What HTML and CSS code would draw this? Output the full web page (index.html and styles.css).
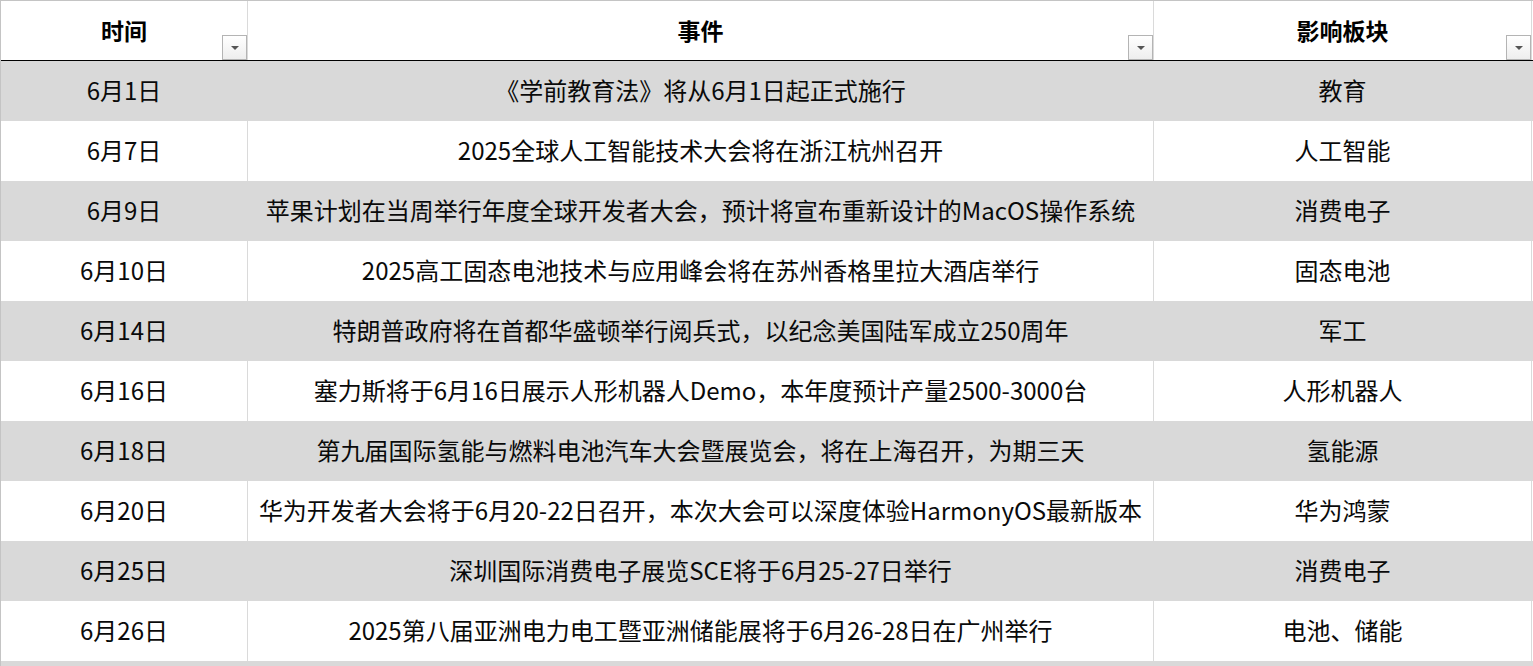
FILE: index.html
```html
<!DOCTYPE html>
<html lang="zh-CN">
<head>
<meta charset="utf-8">
<title>6月事件</title>
<link rel="stylesheet" href="styles.css">
</head>
<body>
<div class="sheet">
  <div class="row head">
    <div class="cell c1">时间<span class="dd"><span class="tri"></span></span></div>
    <div class="cell c2">事件<span class="dd"><span class="tri"></span></span></div>
    <div class="cell c3">影响板块<span class="dd"><span class="tri"></span></span></div>
  </div>
  <div class="row alt"><div class="cell c1">6月1日</div><div class="cell c2">《学前教育法》将从6月1日起正式施行</div><div class="cell c3">教育</div></div>
  <div class="row"><div class="cell c1">6月7日</div><div class="cell c2">2025全球人工智能技术大会将在浙江杭州召开</div><div class="cell c3">人工智能</div></div>
  <div class="row alt"><div class="cell c1">6月9日</div><div class="cell c2">苹果计划在当周举行年度全球开发者大会，预计将宣布重新设计的MacOS操作系统</div><div class="cell c3">消费电子</div></div>
  <div class="row"><div class="cell c1">6月10日</div><div class="cell c2">2025高工固态电池技术与应用峰会将在苏州香格里拉大酒店举行</div><div class="cell c3">固态电池</div></div>
  <div class="row alt"><div class="cell c1">6月14日</div><div class="cell c2">特朗普政府将在首都华盛顿举行阅兵式，以纪念美国陆军成立250周年</div><div class="cell c3">军工</div></div>
  <div class="row"><div class="cell c1">6月16日</div><div class="cell c2">塞力斯将于6月16日展示人形机器人Demo，本年度预计产量2500-3000台</div><div class="cell c3">人形机器人</div></div>
  <div class="row alt"><div class="cell c1">6月18日</div><div class="cell c2">第九届国际氢能与燃料电池汽车大会暨展览会，将在上海召开，为期三天</div><div class="cell c3">氢能源</div></div>
  <div class="row"><div class="cell c1">6月20日</div><div class="cell c2">华为开发者大会将于6月20-22日召开，本次大会可以深度体验HarmonyOS最新版本</div><div class="cell c3">华为鸿蒙</div></div>
  <div class="row alt"><div class="cell c1">6月25日</div><div class="cell c2">深圳国际消费电子展览SCE将于6月25-27日举行</div><div class="cell c3">消费电子</div></div>
  <div class="row"><div class="cell c1">6月26日</div><div class="cell c2">2025第八届亚洲电力电工暨亚洲储能展将于6月26-28日在广州举行</div><div class="cell c3">电池、储能</div></div>
  <div class="row alt tail"><div class="cell c1"></div><div class="cell c2"></div><div class="cell c3"></div></div>
</div>
</body>
</html>
```
FILE: styles.css
```css
* { box-sizing: border-box; }
html, body { margin: 0; padding: 0; background: #fff; }
body {
  font-family: "Noto Sans CJK SC", "Noto Sans", sans-serif;
  color: #0a0a0a;
  overflow: hidden;
}
.sheet {
  width: 1533px;
  border-top: 1px solid #c4c4c4;
  border-left: 1px solid #c4c4c4;
}
.row {
  display: grid;
  grid-template-columns: 247px 906px 378px 1px;
  height: 60px;
}
.row.head {
  height: 60px;
  border-bottom: 1px solid #000;
}
.row.tail { height: 5px; }
.cell {
  display: flex;
  align-items: center;
  justify-content: center;
  font-size: 24px;
  border-right: 1px solid #dadada;
  white-space: nowrap;
  position: relative;
  padding-bottom: 3px;
}
.row.head .cell {
  font-weight: bold;
  font-size: 23px;
  color: #000;
  padding-bottom: 2px;
}
.row.alt { background: #d9d9d9; }
.row.alt .cell { border-right-color: transparent; }
.dd {
  position: absolute;
  right: 0;
  bottom: 0;
  width: 25px;
  height: 25px;
  border: 1px solid #b4b4b4;
  background: linear-gradient(#ffffff, #eeeeee);
  display: flex;
  align-items: center;
  justify-content: center;
}
.tri {
  width: 0;
  height: 0;
  border-left: 4px solid transparent;
  border-right: 4px solid transparent;
  border-top: 4px solid #555;
}
```
